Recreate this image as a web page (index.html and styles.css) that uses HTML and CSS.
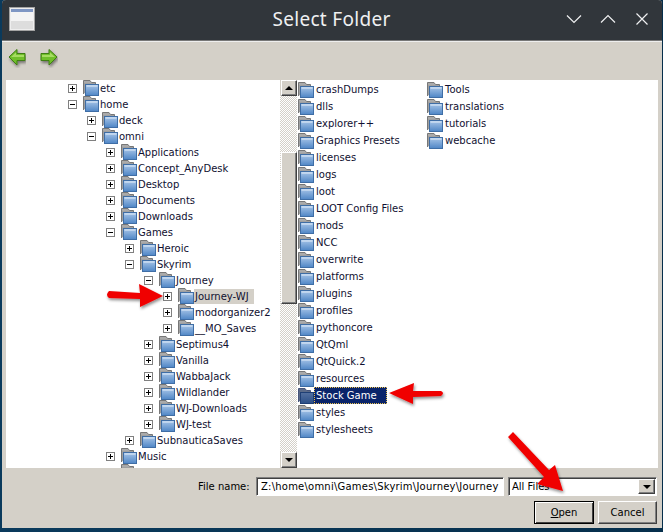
FILE: index.html
```html
<!DOCTYPE html>
<html lang="en">
<head>
<meta charset="utf-8">
<title>Select Folder</title>
<link rel="stylesheet" href="styles.css">
</head>
<body>
<svg class="defs" width="0" height="0" aria-hidden="true">
  <defs>
    <linearGradient id="front" x1="0" y1="0" x2="0" y2="1"><stop offset="0" stop-color="#a9c6e8"/><stop offset="1" stop-color="#4f86c6"/></linearGradient>
    <linearGradient id="frontSel" x1="0" y1="0" x2="0" y2="1"><stop offset="0" stop-color="#54709f"/><stop offset="1" stop-color="#2b4f88"/></linearGradient>
    <symbol id="folder" viewBox="0 0 16 16">
      <path d="M0.5 14V0.5H7L8.5 2.5H12.5V6" fill="#aaaaaa" stroke="#777777"/>
      <rect x="1" y="3" width="11" height="10" fill="#a0a0a0"/>
      <rect x="2.5" y="4.5" width="13" height="11" fill="url(#front)" stroke="#3f6ea6"/>
      <rect x="3.5" y="5.5" width="11" height="1" fill="#e4eefa"/>
    </symbol>
    <symbol id="folderSel" viewBox="0 0 16 16">
      <path d="M0.5 14V0.5H7L8.5 2.5H12.5V6" fill="#5b6a88" stroke="#47557a"/>
      <rect x="1" y="3" width="11" height="10" fill="#5b6a88"/>
      <rect x="2.5" y="4.5" width="13" height="11" fill="url(#frontSel)" stroke="#1f3f75"/>
    </symbol>
    <filter id="shadow" x="-20%" y="-20%" width="140%" height="140%"><feDropShadow dx="1" dy="2" stdDeviation="1.6" flood-color="#000" flood-opacity=".45"/></filter>
  </defs>
</svg>
<main class="window">
  <header class="titlebar">
    <svg class="app-icon" width="26" height="24" viewBox="0 0 26 24"><rect x="0.5" y="0.5" width="25" height="23" fill="#eeeeee" stroke="#a4a4a4"/><rect x="2" y="2" width="22" height="3" fill="#7f97c4"/><rect x="2" y="5" width="22" height="17" fill="#f4f4f4"/><rect x="2" y="14" width="22" height="8" fill="#dddddd"/></svg>
    <h1 class="title">Select Folder</h1>
    <div class="controls">
      <svg width="16" height="10" viewBox="0 0 16 10"><path d="M1 1.5L8 8.5L15 1.5" class="ctl"/></svg>
      <svg width="16" height="10" viewBox="0 0 16 10"><path d="M1 8.5L8 1.5L15 8.5" class="ctl"/></svg>
      <svg class="close-x" width="12" height="12" viewBox="0 0 12 12"><path d="M0.5 0.5L11.5 11.5M11.5 0.5L0.5 11.5" class="ctl"/></svg>
    </div>
  </header>
  <nav class="toolbar">
    <svg width="18" height="20" viewBox="0 0 18 20"><path d="M1 9L9 1.5V5.5H17V12.5H9V17Z" fill="#6fbf2a" stroke="#3f7d12" filter="url(#shadow)"/><path d="M3 9L8 4.5V7H16V9Z" fill="#a6dc62"/></svg>
    <svg width="18" height="20" viewBox="0 0 18 20"><path d="M17 9L9 1.5V5.5H1V12.5H9V17Z" fill="#6fbf2a" stroke="#3f7d12" filter="url(#shadow)"/><path d="M15 9L10 4.5V7H2V9Z" fill="#a6dc62"/></svg>
  </nav>
  <section class="panes">
    <div class="tree">
      <div class="row l0"><span class="exp"></span><svg class="ico"><use href="#folder"/></svg><span class="lbl">etc</span></div>
      <div class="row l0"><span class="exp open"></span><svg class="ico"><use href="#folder"/></svg><span class="lbl">home</span></div>
      <div class="row l1"><span class="exp"></span><svg class="ico"><use href="#folder"/></svg><span class="lbl">deck</span></div>
      <div class="row l1"><span class="exp open"></span><svg class="ico"><use href="#folder"/></svg><span class="lbl">omni</span></div>
      <div class="row l2"><span class="exp"></span><svg class="ico"><use href="#folder"/></svg><span class="lbl">Applications</span></div>
      <div class="row l2"><span class="exp"></span><svg class="ico"><use href="#folder"/></svg><span class="lbl">Concept_AnyDesk</span></div>
      <div class="row l2"><span class="exp"></span><svg class="ico"><use href="#folder"/></svg><span class="lbl">Desktop</span></div>
      <div class="row l2"><span class="exp"></span><svg class="ico"><use href="#folder"/></svg><span class="lbl">Documents</span></div>
      <div class="row l2"><span class="exp"></span><svg class="ico"><use href="#folder"/></svg><span class="lbl">Downloads</span></div>
      <div class="row l2"><span class="exp open"></span><svg class="ico"><use href="#folder"/></svg><span class="lbl">Games</span></div>
      <div class="row l3"><span class="exp"></span><svg class="ico"><use href="#folder"/></svg><span class="lbl">Heroic</span></div>
      <div class="row l3"><span class="exp open"></span><svg class="ico"><use href="#folder"/></svg><span class="lbl">Skyrim</span></div>
      <div class="row l4"><span class="exp open"></span><svg class="ico"><use href="#folder"/></svg><span class="lbl">Journey</span></div>
      <div class="row l5"><span class="exp"></span><svg class="ico"><use href="#folder"/></svg><span class="lbl current">Journey-WJ</span></div>
      <div class="row l5"><span class="exp"></span><svg class="ico"><use href="#folder"/></svg><span class="lbl">modorganizer2</span></div>
      <div class="row l5"><span class="exp"></span><svg class="ico"><use href="#folder"/></svg><span class="lbl">__MO_Saves</span></div>
      <div class="row l4"><span class="exp"></span><svg class="ico"><use href="#folder"/></svg><span class="lbl">Septimus4</span></div>
      <div class="row l4"><span class="exp"></span><svg class="ico"><use href="#folder"/></svg><span class="lbl">Vanilla</span></div>
      <div class="row l4"><span class="exp"></span><svg class="ico"><use href="#folder"/></svg><span class="lbl">WabbaJack</span></div>
      <div class="row l4"><span class="exp"></span><svg class="ico"><use href="#folder"/></svg><span class="lbl">Wildlander</span></div>
      <div class="row l4"><span class="exp"></span><svg class="ico"><use href="#folder"/></svg><span class="lbl">WJ-Downloads</span></div>
      <div class="row l4"><span class="exp"></span><svg class="ico"><use href="#folder"/></svg><span class="lbl">WJ-test</span></div>
      <div class="row l3"><span class="exp"></span><svg class="ico"><use href="#folder"/></svg><span class="lbl">SubnauticaSaves</span></div>
      <div class="row l2"><span class="exp"></span><svg class="ico"><use href="#folder"/></svg><span class="lbl">Music</span></div>
      <div class="row l2"><span class="exp"></span><svg class="ico"><use href="#folder"/></svg></div>
    </div>
    <div class="scrollbar">
      <button class="sb-btn" aria-label="Scroll up"><span class="tri up"></span></button>
      <div class="track"><div class="thumb"></div></div>
      <button class="sb-btn" aria-label="Scroll down"><span class="tri down"></span></button>
    </div>
    <div class="list">
      <div class="col first">
        <div class="item"><svg class="ico"><use href="#folder"/></svg><span class="name">crashDumps</span></div>
        <div class="item"><svg class="ico"><use href="#folder"/></svg><span class="name">dlls</span></div>
        <div class="item"><svg class="ico"><use href="#folder"/></svg><span class="name">explorer++</span></div>
        <div class="item"><svg class="ico"><use href="#folder"/></svg><span class="name">Graphics Presets</span></div>
        <div class="item"><svg class="ico"><use href="#folder"/></svg><span class="name">licenses</span></div>
        <div class="item"><svg class="ico"><use href="#folder"/></svg><span class="name">logs</span></div>
        <div class="item"><svg class="ico"><use href="#folder"/></svg><span class="name">loot</span></div>
        <div class="item"><svg class="ico"><use href="#folder"/></svg><span class="name">LOOT Config Files</span></div>
        <div class="item"><svg class="ico"><use href="#folder"/></svg><span class="name">mods</span></div>
        <div class="item"><svg class="ico"><use href="#folder"/></svg><span class="name">NCC</span></div>
        <div class="item"><svg class="ico"><use href="#folder"/></svg><span class="name">overwrite</span></div>
        <div class="item"><svg class="ico"><use href="#folder"/></svg><span class="name">platforms</span></div>
        <div class="item"><svg class="ico"><use href="#folder"/></svg><span class="name">plugins</span></div>
        <div class="item"><svg class="ico"><use href="#folder"/></svg><span class="name">profiles</span></div>
        <div class="item"><svg class="ico"><use href="#folder"/></svg><span class="name">pythoncore</span></div>
        <div class="item"><svg class="ico"><use href="#folder"/></svg><span class="name">QtQml</span></div>
        <div class="item"><svg class="ico"><use href="#folder"/></svg><span class="name">QtQuick.2</span></div>
        <div class="item"><svg class="ico"><use href="#folder"/></svg><span class="name">resources</span></div>
        <div class="item"><svg class="ico"><use href="#folderSel"/></svg><span class="name selected">Stock Game</span></div>
        <div class="item"><svg class="ico"><use href="#folder"/></svg><span class="name">styles</span></div>
        <div class="item"><svg class="ico"><use href="#folder"/></svg><span class="name">stylesheets</span></div>
      </div>
      <div class="col">
        <div class="item"><svg class="ico"><use href="#folder"/></svg><span class="name">Tools</span></div>
        <div class="item"><svg class="ico"><use href="#folder"/></svg><span class="name">translations</span></div>
        <div class="item"><svg class="ico"><use href="#folder"/></svg><span class="name">tutorials</span></div>
        <div class="item"><svg class="ico"><use href="#folder"/></svg><span class="name">webcache</span></div>
      </div>
    </div>
  </section>
  <footer class="footer">
    <div class="file-row">
      <label class="file-label">File name:</label>
      <div class="field path"><span class="path-text">Z:\home\omni\Games\Skyrim\Journey\Journey</span></div>
      <div class="field combo"><span class="combo-text">All Files</span><button class="sb-btn combo-btn" aria-label="Open list"><span class="tri down"></span></button></div>
    </div>
    <div class="button-row">
      <button class="btn default"><span><u>O</u>pen</span></button>
      <button class="btn">Cancel</button>
    </div>
  </footer>
  <svg class="annotations" width="663" height="532" viewBox="0 0 663 532" aria-hidden="true">
    <g fill="#f00000" filter="url(#shadow)">
      <path d="M109 291L140 293L139 284L163 296L140 307L140 299L109 298Q105 295 109 291Z"/>
      <path d="M441 391L413 391L414 383L389 393L413 404L413 397L441 396Q445 393 441 391Z"/>
      <path d="M508 437L513 432L549 470L555 465L563 491L537 484L544 477Z"/>
    </g>
  </svg>
</main>
</body>
</html>
```

FILE: styles.css
```css
* { box-sizing: border-box; }
html, body { margin: 0; padding: 0; width: 663px; height: 532px; overflow: hidden; }
body { background: linear-gradient(90deg, #0a3a5c, #062f4c); font-family: "DejaVu Sans", "Liberation Sans", sans-serif; font-size: 10px; color: #000; }
.defs { position: absolute; }
.window { margin-left: 2px; width: 660px; height: 528px; background: #d4d0c8; border-radius: 4px 4px 0 0; display: flex; flex-direction: column; overflow: hidden; position: relative; }
.titlebar { height: 42px; flex: none; background: #31363b; border-bottom: 1px solid #eeeeee; box-shadow: inset 0 -1px 0 #777; display: flex; align-items: center; padding: 0 14px 3px 7px; position: relative; }
.app-icon { flex: none; }
.title { flex: 1; margin: 0; text-align: center; font: 400 19px "Noto Sans", sans-serif; letter-spacing: .3px; color: #eff0f1; padding-left: 62px; }
.controls { display: flex; align-items: center; gap: 18px; }
.close-x { margin-left: 2px; }
.ctl { fill: none; stroke: #eff0f1; stroke-width: 1.2; }
.toolbar { height: 38px; flex: none; display: flex; gap: 14px; align-items: flex-start; padding: 6px 0 0 6px; }
.panes { height: 388px; flex: none; margin: 0 4px; display: flex; }
.tree { width: 274px; flex: none; background: #fff; overflow: hidden; }
.row { height: 16px; display: flex; align-items: center; white-space: nowrap; }
.l0 { padding-left: 62px; }
.l1 { padding-left: 81px; }
.l2 { padding-left: 100px; }
.l3 { padding-left: 119px; }
.l4 { padding-left: 138px; }
.l5 { padding-left: 157px; }
.exp { width: 9px; height: 9px; border: 1px solid #808080; flex: none; margin-right: 6px; background: linear-gradient(#000, #000) center / 5px 1px no-repeat, linear-gradient(#000, #000) center / 1px 5px no-repeat, #fff; }
.exp.open { background: linear-gradient(#000, #000) center / 5px 1px no-repeat, #fff; }
.ico { width: 16px; height: 16px; flex: none; }
.lbl { padding: 0 1px; line-height: 15px; color: #101030; }
.current { background: #d4d0c8; padding-right: 5px; }
.scrollbar { width: 17px; flex: none; display: flex; flex-direction: column; background: #d4d0c8; }
.sb-btn { width: 16px; height: 16px; flex: none; padding: 0; margin: 0; display: flex; align-items: center; justify-content: center; background: #d4d0c8; border: 1px solid; border-color: #fff #404040 #404040 #fff; box-shadow: inset -1px -1px 0 #808080; }
.scrollbar .sb-btn { margin-left: 1px; }
.tri { width: 0; height: 0; border-left: 4px solid transparent; border-right: 4px solid transparent; }
.tri.up { border-bottom: 4px solid #000; }
.tri.down { border-top: 4px solid #000; }
.track { flex: 1; background-color: #fff; background-image: repeating-conic-gradient(#d4d0c8 0 25%, #fff 0 50%); background-size: 2px 2px; padding: 56px 0 0 1px; }
.thumb { width: 16px; height: 152px; background: #d4d0c8; border: 1px solid; border-color: #fff #404040 #404040 #fff; box-shadow: inset -1px -1px 0 #808080; }
.list { flex: 1; background: #fff; display: flex; overflow: hidden; padding: 1px 0 0 1px; }
.col { display: flex; flex-direction: column; }
.col.first { width: 129px; flex: none; }
.item { height: 17px; display: flex; align-items: center; white-space: nowrap; }
.name { padding: 0 2px; line-height: 15px; color: #101030; }
.selected { background: #0a246a; color: #fff; outline: 1px dotted #e8c050; outline-offset: -1px; width: 73px; line-height: 17px; }
.footer { flex: 1; padding: 9px 5px 0 0; display: flex; flex-direction: column; gap: 5px; }
.file-row { display: flex; align-items: center; }
.file-label { margin-left: 196px; width: 58px; }
.field { height: 19px; background: #fff; border: 1px solid; border-color: #808080 #fff #fff #808080; box-shadow: inset 1px 1px 0 #404040; }
.path { width: 248px; margin-right: 4px; padding: 0 4px; line-height: 17px; overflow: hidden; white-space: nowrap; }
.path-text { display: block; overflow: hidden; letter-spacing: .22px; }
.combo { flex: 1; display: flex; align-items: center; justify-content: space-between; padding: 0 1px 0 3px; }
.combo-btn { width: 17px; height: 15px; }
.button-row { display: flex; justify-content: flex-end; gap: 4px; }
.btn { width: 59px; height: 23px; padding: 0; background: #d4d0c8; font: inherit; color: #000; border: 1px solid; border-color: #fff #404040 #404040 #fff; box-shadow: inset -1px -1px 0 #808080; }
.btn.default { width: 60px; border: 1px solid #000; box-shadow: inset 1px 1px 0 #fff, inset -1px -1px 0 #404040; }
.annotations { position: absolute; left: -2px; top: 0; pointer-events: none; }
```
